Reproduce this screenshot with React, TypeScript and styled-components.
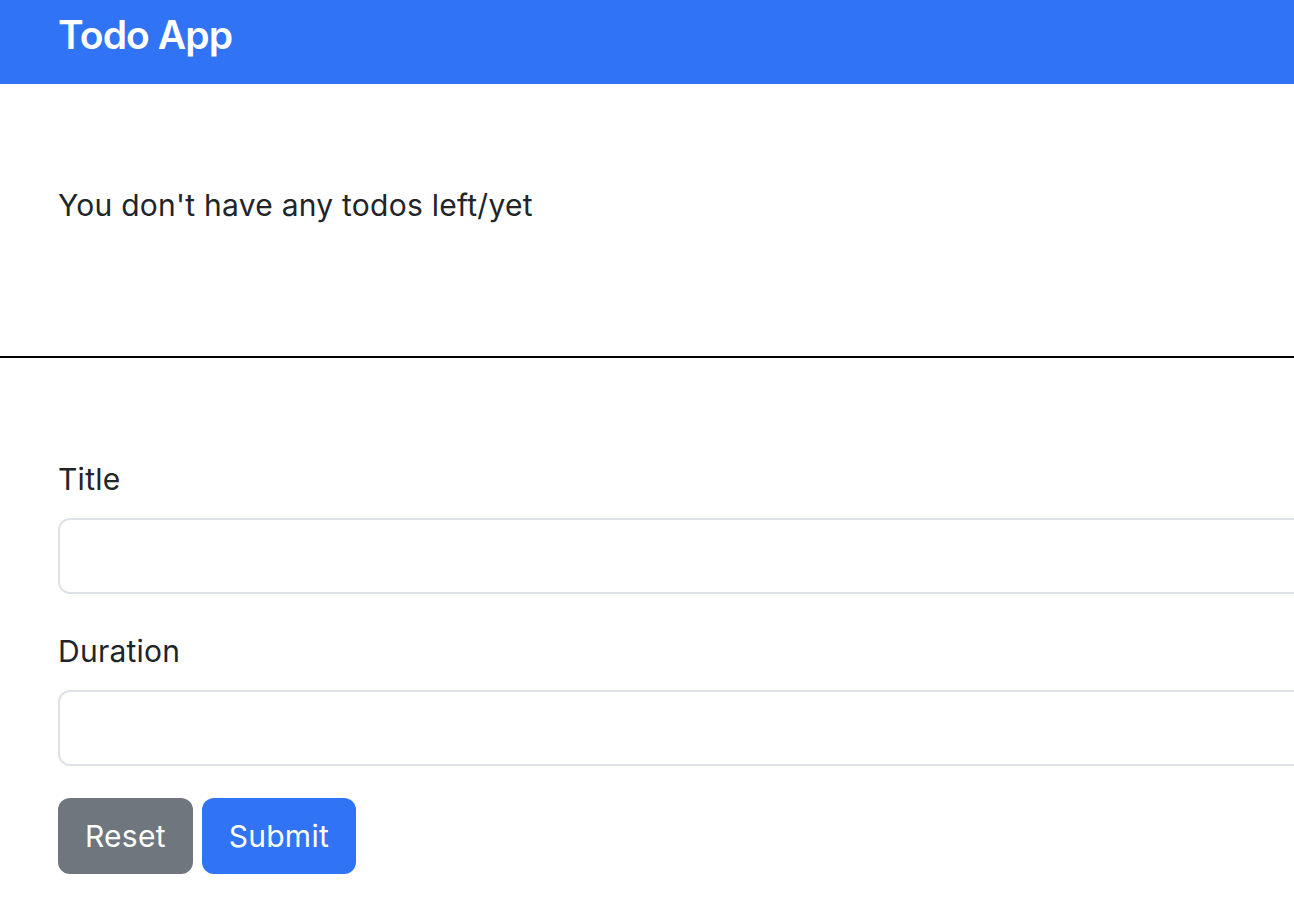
import React from "react";
import styled, { createGlobalStyle } from "styled-components";

const Global = createGlobalStyle`
  html, body { margin: 0; padding: 0; background: #fff; }
  body {
    font-family: Inter, "Liberation Sans", Arial, sans-serif;
    color: #212529;
    overflow: hidden;
  }
  * { box-sizing: border-box; }
`;

const Page = styled.div`
  width: 1294px;
  min-height: 908px;
  display: flex;
  flex-direction: column;
`;

const Header = styled.header`
  height: 84px;
  background: #3073f4;
  display: flex;
  align-items: flex-start;
  padding: 15px 0 0 58px;
`;

const Brand = styled.h1`
  margin: 0;
  font-size: 39px;
  font-weight: 600;
  letter-spacing: -0.9px;
  color: #fff;
  line-height: 39px;
`;

const Container = styled.div`
  padding: 0 0 0 58px;
  display: flex;
  flex-direction: column;
`;

const Empty = styled.p`
  margin: 99px 0 0;
  height: 173px;
  font-size: 30px;
  letter-spacing: 0.25px;
  line-height: 44px;
`;

const Rule = styled.hr`
  margin: 0;
  border: none;
  height: 2px;
  background: #000;
`;

const Form = styled.form`
  display: flex;
  flex-direction: column;
  padding: 99px 0 0 58px;
`;

const Field = styled.div<{ $mb: number }>`
  display: flex;
  flex-direction: column;
  margin-bottom: ${(p) => p.$mb}px;
`;

const Label = styled.label`
  font-size: 30px;
  letter-spacing: 0.25px;
  line-height: 44px;
  margin-bottom: 17px;
`;

const Input = styled.input`
  width: 1300px;
  height: 76px;
  border: 2px solid #dee2e6;
  border-radius: 12px;
  font-size: 30px;
  padding: 0 24px;
  outline: none;
  background: #fff;
`;

const Buttons = styled.div`
  display: flex;
  gap: 9px;
`;

const Button = styled.button<{ $variant: "primary" | "secondary" }>`
  height: 76px;
  padding: 0 27px;
  border: none;
  border-radius: 12px;
  font-family: Inter, "Liberation Sans", Arial, sans-serif;
  font-size: 30px;
  letter-spacing: 0.25px;
  color: #fff;
  background: ${(p) => (p.$variant === "primary" ? "#3073f4" : "#6f767e")};
  cursor: pointer;
`;

export default function App() {
  return (
    <Page>
      <Global />
      <Header>
        <Brand>Todo App</Brand>
      </Header>
      <Container>
        <Empty>You don't have any todos left/yet</Empty>
      </Container>
      <Rule />
      <Form onSubmit={(e) => e.preventDefault()}>
        <Field $mb={35}>
          <Label>Title</Label>
          <Input />
        </Field>
        <Field $mb={32}>
          <Label>Duration</Label>
          <Input />
        </Field>
        <Buttons>
          <Button type="reset" $variant="secondary">Reset</Button>
          <Button type="submit" $variant="primary">Submit</Button>
        </Buttons>
      </Form>
    </Page>
  );
}
